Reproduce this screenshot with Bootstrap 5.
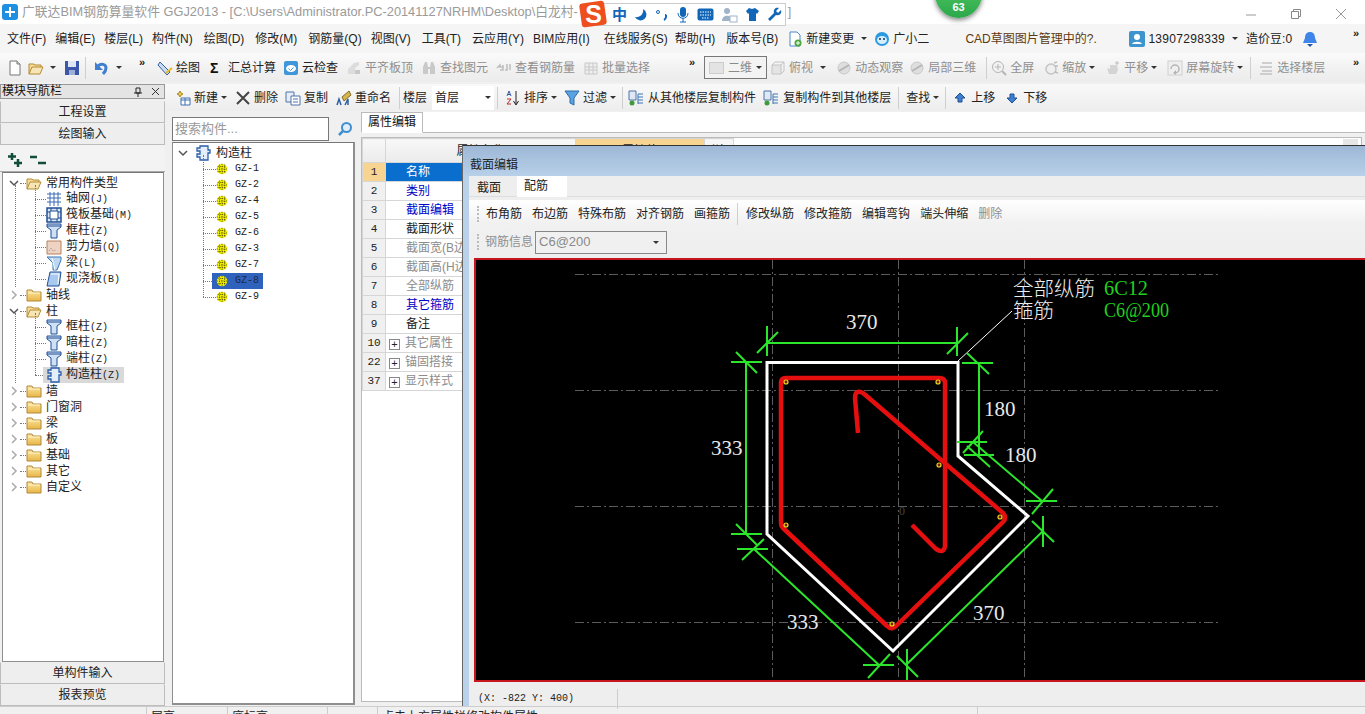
<!DOCTYPE html>
<html lang="zh-CN">
<head>
  <meta charset="UTF-8" />
  <meta name="viewport" content="width=device-width, initial-scale=1" />
  <title>广联达BIM钢筋算量软件 GGJ2013</title>
  <link href="https://cdn.jsdelivr.net/npm/bootstrap@5.3.3/dist/css/bootstrap.min.css" rel="stylesheet">
  <style>
    html, body { height: 100%; margin: 0; overflow: hidden; }
    body { width: 1365px; height: 714px; position: relative; background: #f0f0f0; color: #222;
      font-family: "Liberation Sans", "Noto Sans CJK SC", sans-serif; font-size: 12px; line-height: 16px; }
    svg.ic { width: 16px; height: 16px; flex: none; }
    .hw { font-family: "Liberation Mono", monospace; font-size: 10px; }
    .l3 { margin-left: 3px; } .l5 { margin-left: 5px; } .l6 { margin-left: 6px; } .l7 { margin-left: 7px; }
    .l8 { margin-left: 8px; } .l9 { margin-left: 9px; } .l10 { margin-left: 10px; }

    /* title, menu, toolbars */
    .title-bar { height: 24px; background: #fff; color: #9a9a9a; font-size: 12.8px; padding-left: 2px; white-space: nowrap; }
    .title-end { margin-left: 210px; }
    .win-btns { position: absolute; right: 18px; top: 4px; height: 20px; gap: 33px; }
    .menu-bar { height: 29px; background: #f5f5f5; white-space: nowrap; padding-left: 7px; }
    .menu-bar .mi { margin-right: 9px; }
    .menu-bar .mi-wide { margin-right: 11px; }
    .menu-bar .mi-bim { margin-right: 14px; }
    .menu-bar .mi-tight { margin-right: 7px; }
    .tool-bar { height: 29px; background: linear-gradient(#fbfbfb, #f1f1f1 55%, #ececec); white-space: nowrap; padding-left: 7px; }
    .tool-bar2 { height: 27px; margin-top: 2px; background: linear-gradient(#f9f9f9, #ededed); white-space: nowrap; padding-left: 10px; }
    .itm { display: flex; align-items: center; gap: 3px; flex: none; }
    .off { color: #8f8f8f; }
    .caret-dn { width: 0; height: 0; border: 3px solid transparent; border-top: 3px solid #333; border-bottom: 0; flex: none; }
    .vsep { width: 1px; height: 22px; background: #cfcfcf; flex: none; }
    .chev { width: 8px; font-size: 11px; line-height: 10px; font-weight: 700; align-self: flex-start; margin-top: 4px; flex: none; color: #222; }
    .tb-c1 { margin-left: 17px; }
    .tb-c2 { margin-left: 39px; }
    .sigma { width: 15px; font-size: 14px; line-height: 14px; text-align: left; color: #111; }
    .view-combo { width: 63px; height: 23px; border: 1px solid #777; background: #f3f3f3; color: #8a8a8a; padding: 0 4px; flex: none; }
    .view-swatch { width: 15px; height: 12px; background: #e3e3e3; border: 1px solid #ccc; margin-right: 4px; }
    .floor-box { width: 62px; height: 24px; background: #fff; flex: none; padding: 0 3px; }
    .news { color: #5c3a10; width: 164px; flex: none; margin-left: 36px; }
    .phone { letter-spacing: .3px; }

    /* body */
    .work { height: 624px; }
    .nav-pane { width: 165px; flex: none; }
    .nav-head { height: 15px; margin-top: 2px; background: #e4e4e4; border: 1px solid #999; line-height: 13px; color: #111; padding-left: 1px; }
    .side-btn { display: block; width: 100%; height: 22px; padding: 0; border-radius: 0; border: 1px solid #bdbdbd; border-top-color: #eee; background: #eee;
      font-size: 12px; line-height: 20px; color: #222; }
    .side-btn:hover { background: #eee; color: #222; }
    .btn-first { margin-top: 2px; }
    .xp-bar { height: 27px; background: #f3f3f3; padding: 7px 7px 0; border-bottom: 1px solid #aaa; gap: 7px; }
    .tree-box { background: #fff; border: 1px solid #8f8f8f; border-top-color: #777; }
    .tree-left { height: 490px; margin: 0 1px 0 2px; padding-top: 2px; }
    .comp-pane { width: 183px; flex: none; margin-left: 7px; }
    .search-wrap { height: 31px; padding-top: 6px; background: #f0f0f0; }
    .search-box { width: 157px; height: 24px; border: 1px solid #777; background: #fff; color: #999; font-size: 13px; line-height: 22px; padding-left: 2px; }
    .tree-mid { height: 563px; border-width: 1px 2px 2px 1px; padding-top: 2px; }

    .tree-row { height: 16px; display: flex; align-items: center; white-space: nowrap; position: relative; }
    .t-tw { width: 12px; flex: none; display: flex; justify-content: center; }
    .t-dash { border-bottom: 1px dotted #777; height: 1px; flex: none; }
    .nav-first { padding-left: 5px; }
    .fold-dash { width: 6px; }
    .kid { padding-left: 32px; }
    .kid-dash { width: 11px; }
    .kid-tx { margin-left: 4px; }
    .t-sel-grey { background: #d9d9d9; padding: 0 4px 0 3px; height: 16px; }
    .kid-dash-s { width: 8px; }
    .t-kids { position: relative; }
    .t-kids::before { content: ""; position: absolute; left: 32px; top: -6px; bottom: 8px; border-left: 1px dotted #777; }
    .t-kids::after { content: ""; position: absolute; left: 12px; top: -6px; bottom: 0; border-left: 1px dotted #777; }
    .mid-kids::before { left: 30px; top: -6px; }
    .mid-kids::after { display: none; }
    .mid-kid { padding-left: 30px; }
    .mid-dash { width: 13px; }
    .mid-dash-s { width: 9px; }
    svg.gi { width: 12px; height: 12px; flex: none; }
    .gz-tx { margin-left: 7px; color: #222; }
    .t-sel-blue { background: #2f62bd; padding: 0 4px; height: 16px; }
    .t-sel-blue .gz-tx { color: #1c2b45; }

    .prop-pane { width: 1005px; flex: none; margin-left: 6px; }
    .prop-tabs { height: 21px; border-bottom: 1px solid #bbb; background: #fff; margin-top: 1px; }
    .prop-tab { height: 21px; width: 62px; border: 1px solid #bbb; border-bottom-color: #fff; background: #fff; text-align: center; line-height: 19px; color: #111; }
    .prop-body { height: 565px; margin-top: 4px; background: #fff; border: 1px solid #bbb; width: 1001px; overflow: hidden; position: relative; }
    .scroll-up { position: absolute; right: 3px; top: 1px; width: 15px; height: 9px; background: #e6e6e6; }
    .prop-tbl { border-collapse: collapse; table-layout: fixed; width: 371px; }
    .prop-tbl .c-n { width: 23px; } .prop-tbl .c-nm { width: 190px; } .prop-tbl .c-val { width: 129px; } .prop-tbl .c-ex { width: 29px; }
    .prop-tbl td, .prop-tbl th { border: 1px solid #d6d6d6; height: 19px; padding: 0; font-weight: 400; overflow: hidden; white-space: nowrap; }
    .prop-tbl th { height: 24px; background: linear-gradient(#f8f8f8, #ebebeb); text-align: center; }
    .prop-tbl th.val-col { background: #f8d492; }
    .prop-tbl .n { background: #f0f0f0; text-align: center; font-family: "Liberation Mono", monospace; font-size: 11px; }
    .prop-tbl .n-on { background: #f8d492; }
    .prop-tbl .nm { padding-left: 20px; }
    .prop-tbl .nm-on { background: #0a6ecf; color: #fff; }
    .prop-tbl .lk { color: #0000c8; }
    .prop-tbl .gy { color: #8c8c8c; }
    .prop-tbl .gr { padding-left: 3px; color: #8c8c8c; }
    .plus-box { display: inline-block; width: 11px; height: 11px; border: 1px solid #888; line-height: 8px; text-align: center; color: #222; font-size: 11px; margin-right: 5px; vertical-align: -1px; }

    .status-line { height: 8px; overflow: hidden; background: #f0f0f0; border-top: 1px solid #ccc; line-height: 16px; }
    .status-line > div { border-right: 1px solid #ccc; padding: 2px 0 0 4px; height: 16px; flex: none; }
    .st-a { width: 147px; } .st-b { width: 81px; } .st-c { width: 100px; } .st-d { width: 50px; } .st-e { width: 600px; }

    /* floating: dialog, tray bar, badge */
    .sect-dlg { position: absolute; left: 462px; top: 145px; right: 0; height: 561px; border-top: 1px solid #333; border-left: 1px solid #666;
      background: linear-gradient(#9db7d6, #b9d1e9 31px); padding: 30px 0 0 6px; }
    .sect-title { position: absolute; left: 7px; top: 11px; color: #222; }
    .sect-inner { background: #eee; height: 530px; }
    .sect-tabs { height: 21px; border-bottom: 1px solid #ddd; background: #eee; }
    .sect-tab { width: 48px; height: 21px; padding-left: 8px; line-height: 24px; }
    .sect-tab-on { background: #fff; width: 50px; padding-left: 7px; line-height: 21px; }
    .sect-tools { height: 58px; margin-top: 3px; background: linear-gradient(#fff, #f1f1f1 40%, #eee); }
    .sect-row { height: 28px; padding-left: 8px; white-space: nowrap; }
    .row-gap { column-gap: 10px; }
    .row-gap .vsep { margin: 0 -2px 0 -3px; }
    .grip { width: 3px; height: 16px; border-left: 2px dotted #bbb; flex: none; }
    .row-gap .grip { margin-right: -4px; }
    .row2-grip { margin-right: 5px; }
    .rebar-combo { width: 132px; height: 23px; border: 1px solid #888; background: #f0f0f0; color: #8a8a8a; padding: 0 3px; margin-left: 2px; font-size: 13px; }
    .cad-view { display: block; height: 424px; margin-left: 5px; border: 2px solid #c4161c; border-right: 0; background: #000; }
    .cad-view svg { display: block; width: 890px; height: 420px; }
    .cad-status { height: 20px; margin-top: 7px; padding-left: 9px; font-family: "Liberation Mono", monospace; font-size: 10px; line-height: 20px; }
    .cad-status > div { border-right: 1px solid #ccc; width: 140px; }

    .ime-bar { position: absolute; left: 592px; top: 3px; width: 194px; height: 23px; background: #fff; border: 1px solid #ccc; padding-left: 19px; gap: 7px; }
    .ime-logo { position: absolute; left: 579px; top: 0; width: 29px; height: 28px; }
    .ime-zh { color: #1166b8; font-weight: 700; font-size: 15px; }
    .pts-badge { position: absolute; left: 935px; top: -30px; width: 47px; height: 48px; border-radius: 50%; background: linear-gradient(#5fcf6b, #2aa84a); color: #fff;
      font-size: 11px; font-weight: 700; text-align: center; padding-top: 29px; box-shadow: 0 2px 5px rgba(0,0,0,.5); }
  </style>
</head>
<body>

  <svg width="0" height="0" class="position-absolute">
    <defs>
      <linearGradient id="gFold" x1="0" y1="0" x2="0" y2="1"><stop offset="0" stop-color="#fbe7a1"/><stop offset="1" stop-color="#e7b544"/></linearGradient>
      <symbol id="i-doc" viewBox="0 0 16 16"><path d="M3 1h7l3 3v11H3z" fill="#fff" stroke="#777"/><path d="M10 1v3h3" fill="#ddd" stroke="#777"/></symbol>
      <symbol id="i-open" viewBox="0 0 16 16"><path d="M1 14V4h5l1 1h6v2" fill="#f5dc9a" stroke="#b58b35"/><path d="M1 14l3-7h11l-3 7z" fill="#f7e6b5" stroke="#b58b35"/></symbol>
      <symbol id="i-fold" viewBox="0 0 16 16"><path d="M1 3h5l1 2h8v9H1z" fill="url(#gFold)" stroke="#b08a3a"/><path d="M2 6h12" stroke="#fff3c4"/></symbol>
      <symbol id="i-save" viewBox="0 0 16 16"><path d="M1 1h14v14H1z" fill="#3c57a8"/><path d="M4 1h8v6H4z" fill="#dfe6f5"/><path d="M5 10h6v5H5z" fill="#9fb0d8"/></symbol>
      <symbol id="i-undo" viewBox="0 0 16 16"><path d="M5 6c3-3 8-2 8 2 0 3-1 4-3 6" fill="none" stroke="#3f7ed0" stroke-width="3"/><path d="M2 2v8h8z" fill="#3f7ed0"/></symbol>
      <symbol id="i-draw" viewBox="0 0 16 16"><path d="M3 2l10 10-3 3L1 5z" fill="#cbdcf2" stroke="#33609f"/><path d="M9 13l6-5" stroke="#e8b62c" stroke-width="2"/></symbol>
      <symbol id="i-cloud" viewBox="0 0 16 16"><rect x="1" y="1" width="14" height="14" rx="2" fill="#3f97d8"/><ellipse cx="8" cy="8.500" rx="5" ry="3.500" fill="#fff"/><path d="M5.500 8.500l2 2 3-3" stroke="#3f97d8" fill="none"/></symbol>
      <symbol id="i-gbox" viewBox="0 0 16 16"><path d="M2 5h9v9H2z" fill="#e4e4e4" stroke="#c4c4c4"/><path d="M2 5l3-3h9v9l-3 3M11 5l3-3" fill="none" stroke="#c4c4c4"/></symbol>
      <symbol id="i-gplate" viewBox="0 0 16 16"><path d="M2 14V9l6-6 5-1v3l-4 3v6z" fill="#dcdcdc"/><path d="M9 10h5v4H9z" fill="#c8c8c8"/></symbol>
      <symbol id="i-gbino" viewBox="0 0 16 16"><path d="M2 14V7l2-5h2l1 5v7zM9 14V7l1-5h2l2 5v7z" fill="#c9c9c9"/><path d="M7 8h2" stroke="#999"/></symbol>
      <symbol id="i-grebar" viewBox="0 0 16 16"><path d="M1 8l3-3v2h3M7 5v5H4" fill="none" stroke="#bdbdbd" stroke-width="1.500"/><path d="M11 4v6h-2M14 4v6" fill="none" stroke="#bdbdbd" stroke-width="1.500"/></symbol>
      <symbol id="i-gball" viewBox="0 0 16 16"><circle cx="8" cy="8" r="6" fill="#dedede" stroke="#c8c8c8"/><path d="M3 11L13 5" stroke="#b5b5b5" stroke-width="2"/></symbol>
      <symbol id="i-gzoom" viewBox="0 0 16 16"><circle cx="7" cy="7" r="5.500" fill="#f2f2f2" stroke="#b5b5b5"/><path d="M11 11l4 4" stroke="#b5b5b5" stroke-width="2"/><path d="M4 7h6M7 4v6" stroke="#b5b5b5"/></symbol>
      <symbol id="i-gshrink" viewBox="0 0 16 16"><circle cx="8" cy="9" r="5" fill="#efefef" stroke="#c4c4c4" stroke-width="1.500"/><path d="M11 3l3-1M12 6h3M12 12l3 1" stroke="#bdbdbd" stroke-width="1.500"/></symbol>
      <symbol id="i-ghand" viewBox="0 0 16 16"><path d="M4 14L2 8l3 1V5h7l1 5-2 4z" fill="#d4d4d4"/><path d="M12 1v4M10 3h4" stroke="#bdbdbd"/></symbol>
      <symbol id="i-grot" viewBox="0 0 16 16"><rect x="1" y="1" width="14" height="14" fill="#efefef" stroke="#d0d0d0"/><path d="M4 9a4 4 0 1 1 4 4" fill="none" stroke="#b5b5b5" stroke-width="1.500"/><path d="M9 10l-3 3 3 2z" fill="#b5b5b5"/></symbol>
      <symbol id="i-ggrid" viewBox="0 0 16 16"><path d="M2 3h12v11H2z" fill="#efefef" stroke="#c8c8c8"/><path d="M2 7h12M2 10h12M6 3v11M10 3v11" stroke="#c8c8c8"/></symbol>
      <symbol id="i-gfloor" viewBox="0 0 16 16"><path d="M4 3h10M2 7h12M4 11h10M2 14h12" stroke="#c2c2c2" stroke-width="1.500"/></symbol>
      <symbol id="i-change" viewBox="0 0 16 16"><path d="M3 1h7l3 3v11H3z" fill="#fff" stroke="#4a87c7"/><circle cx="11" cy="12" r="3.500" fill="#4aa93a"/><path d="M9 12h4M11 10v4" stroke="#fff"/></symbol>
      <symbol id="i-bot" viewBox="0 0 16 16"><circle cx="8" cy="8" r="7" fill="#2c9ae0"/><ellipse cx="8" cy="9" rx="5" ry="4" fill="#d6efff"/><circle cx="6" cy="8" r="1" fill="#135"/><circle cx="10" cy="8" r="1" fill="#135"/></symbol>
      <symbol id="i-user" viewBox="0 0 16 16"><rect width="16" height="16" rx="2" fill="#3d94cf"/><circle cx="8" cy="6" r="3" fill="#fff"/><path d="M3 13c1-3 9-3 10 0z" fill="#fff"/></symbol>
      <symbol id="i-bell" viewBox="0 0 16 16"><path d="M8 1c3 0 5 2 5 6l2 5H1l2-5c0-4 2-6 5-6z" fill="#3f84e8"/><path d="M5 13h6l-3 3z" fill="#24579f"/></symbol>
      <symbol id="i-new" viewBox="0 0 16 16"><path d="M5 1l1 2 2 1-2 1-1 2-1-2-2-1 2-1z" fill="#f4cf47" stroke="#a8862a"/><path d="M6 8h9v7H6z" fill="#fff" stroke="#3c6fb0"/><path d="M6 10h9M10 8v7" stroke="#3c6fb0"/></symbol>
      <symbol id="i-del" viewBox="0 0 16 16"><path d="M2 2l12 12M14 2L2 14" stroke="#444" stroke-width="2"/></symbol>
      <symbol id="i-copy" viewBox="0 0 16 16"><path d="M1 2h8v10H1z" fill="#e6edf7" stroke="#4e74a6"/><path d="M6 6h9v9H6z" fill="#fff" stroke="#4e74a6"/><path d="M8 9h5M8 12h5" stroke="#4e74a6"/></symbol>
      <symbol id="i-ren" viewBox="0 0 16 16"><path d="M6 7l7-6 2 4-7 6z" fill="#d9b64a" stroke="#7e6a2a"/><path d="M1 15l2-6 2 6M9 15l3-6v6" stroke="#2c5fa6" stroke-width="1.500" fill="none"/></symbol>
      <symbol id="i-sort" viewBox="0 0 16 16"><path d="M2 6l2-5 2 5M3 4.500h2" stroke="#3458a6" fill="none"/><path d="M2 9h4l-4 5h4" stroke="#b62a2a" fill="none"/><path d="M11 1v13M8.500 11l2.500 4 2.500-4" stroke="#222" fill="none"/></symbol>
      <symbol id="i-filter" viewBox="0 0 16 16"><path d="M1 1h14L10 8v7l-4-2V8z" fill="#5aa3e0" stroke="#2c6cab"/></symbol>
      <symbol id="i-cp1" viewBox="0 0 16 16"><path d="M1 1h7v9H1z" fill="#dfe8f4" stroke="#4e74a6"/><circle cx="4" cy="13" r="2.500" fill="#3f9a3a"/><path d="M10 4h5M10 7h5M10 10h5M10 13h5M10 4v10" stroke="#3c76b5"/></symbol>
      <symbol id="i-up" viewBox="0 0 16 16"><path d="M8 3l5 5h-3v4H6V8H3z" fill="#3f7fd0" stroke="#1f4f96"/></symbol>
      <symbol id="i-dn" viewBox="0 0 16 16"><path d="M8 13L3 8h3V4h4v4h3z" fill="#3f7fd0" stroke="#1f4f96"/></symbol>
      <symbol id="i-search" viewBox="0 0 16 16"><circle cx="9.500" cy="6.500" r="4.500" fill="#e2effa" stroke="#3f8fcf" stroke-width="2"/><path d="M6 10l-4 4" stroke="#3f8fcf" stroke-width="2.500"/></symbol>
      <symbol id="i-col" viewBox="0 0 16 16"><path d="M1 1h14v3l-4 3v8H5V7L1 4z" fill="#cfe0f5" stroke="#1e4f98"/><path d="M1 3h14" stroke="#1e4f98"/></symbol>
      <symbol id="i-grid" viewBox="0 0 16 16"><path d="M1 3h14M1 7h14M1 11h14M4 1v14M8 1v14M12 1v14" stroke="#3b6bb5"/></symbol>
      <symbol id="i-raft" viewBox="0 0 16 16"><path d="M1 1h14v14H1z" fill="#dbe7f6" stroke="#204f95" stroke-width="1.500"/><path d="M4 4h8v8H4z" fill="#fff" stroke="#204f95"/><path d="M1 5h3M1 11h3M12 5h3M12 11h3M5 1v3M11 1v3M5 12v3M11 12v3" stroke="#204f95"/></symbol>
      <symbol id="i-wall" viewBox="0 0 16 16"><path d="M1 2h14v13H1z" fill="#efd3c2" stroke="#b5805f"/><path d="M3 12l2-3 2 3 3-1" stroke="#999" stroke-dasharray="1 1" fill="none"/></symbol>
      <symbol id="i-beam" viewBox="0 0 16 16"><path d="M1 2h14v3L11 15H7V8z" fill="#bcd7f2" stroke="#3c76b5"/><path d="M6 3l3 12" stroke="#fff"/></symbol>
      <symbol id="i-slab" viewBox="0 0 16 16"><path d="M4 1h11l-2 14H1z" fill="#a9c9ee" stroke="#1e4f98"/><path d="M5 3h8l-1 10" stroke="#fff" fill="none"/></symbol>
      <symbol id="i-gzc" viewBox="0 0 16 16"><path d="M5 1h8v4h2v3h-2v7H5v-3H2V9h3V6H2V3h3z" fill="#e4eefb" stroke="#2a5ea8" stroke-width="1.300"/></symbol>
      <symbol id="i-gear" viewBox="0 0 16 16"><circle cx="8" cy="8" r="7" fill="#f4f000"/><path d="M2 4.500h12M1 8h14M2 11.500h12M4.500 2v12M8 1v14M11.500 2v12" stroke="#3a3a00" stroke-dasharray="1.500 1.500"/></symbol>
      <symbol id="i-plus" viewBox="0 0 16 16"><path d="M5 1v7M1 4.500h8M11 7v8M7 11h8" stroke="#114d3a" stroke-width="2.500"/></symbol>
      <symbol id="i-minus" viewBox="0 0 16 16"><path d="M0 5h7M8 11h8" stroke="#114d3a" stroke-width="2.500"/></symbol>
      <symbol id="i-arrow-d" viewBox="0 0 12 12"><path d="M2 4l4 4 4-4" stroke="#555" stroke-width="1.500" fill="none"/></symbol>
      <symbol id="i-arrow-r" viewBox="0 0 12 12"><path d="M4 2l4 4-4 4" stroke="#aaa" stroke-width="1.500" fill="none"/></symbol>
    </defs>
  </svg>

  <!-- title -->
  <div class="title-bar d-flex align-items-center">
    <svg class="ic me-1" viewBox="0 0 16 16"><rect width="16" height="16" rx="3" fill="#1f8fe0"/><path d="M8 3v10M3 8h10" stroke="#fff" stroke-width="2"/></svg>
    <span>广联达BIM钢筋算量软件 GGJ2013 - [C:\Users\Administrator.PC-20141127NRHM\Desktop\白龙村-</span>
    <span class="title-end">]</span>
  </div>
  <div class="win-btns d-flex align-items-center">
    <svg width="12" height="12"><path d="M1 7h10" stroke="#999"/></svg>
    <svg width="12" height="12"><path d="M1.500 3.500h7v7h-7zM3.500 3.500v-2h7v7h-2" stroke="#888" fill="none"/></svg>
    <svg width="12" height="12"><path d="M1 1l10 10M11 1L1 11" stroke="#999"/></svg>
  </div>

  <!-- menu -->
  <div class="menu-bar d-flex align-items-center">
    <span class="itm mi">文件(F)</span>
    <span class="itm mi">编辑(E)</span>
    <span class="itm mi">楼层(L)</span>
    <span class="itm mi-wide">构件(N)</span>
    <span class="itm mi-wide">绘图(D)</span>
    <span class="itm mi-wide">修改(M)</span>
    <span class="itm mi">钢筋量(Q)</span>
    <span class="itm mi-wide">视图(V)</span>
    <span class="itm mi-wide">工具(T)</span>
    <span class="itm mi">云应用(Y)</span>
    <span class="itm mi-bim">BIM应用(I)</span>
    <span class="itm mi-tight">在线服务(S)</span>
    <span class="itm mi-wide">帮助(H)</span>
    <span class="itm mi">版本号(B)</span>
    <span class="itm mi-tight"><svg class="ic"><use href="#i-change"/></svg>新建变更<i class="caret-dn ms-1"></i></span>
    <span class="itm"><svg class="ic"><use href="#i-bot"/></svg>广小二</span>
    <span class="news">CAD草图图片管理中的?.</span>
    <span class="itm"><svg class="ic"><use href="#i-user"/></svg><span class="phone">13907298339</span><i class="caret-dn ms-1"></i></span>
    <span class="itm l8">造价豆:0</span>
    <svg class="ic l10"><use href="#i-bell"/></svg>
    <span class="chev ms-auto me-1">»</span>
  </div>

  <!-- toolbar -->
  <div class="tool-bar d-flex align-items-center">
    <svg class="ic"><use href="#i-doc"/></svg>
    <span class="itm l5"><svg class="ic"><use href="#i-open"/></svg><i class="caret-dn l3"></i></span>
    <svg class="ic l8"><use href="#i-save"/></svg>
    <span class="vsep l5"></span>
    <span class="itm l7"><svg class="ic"><use href="#i-undo"/></svg><i class="caret-dn ms-1"></i></span>
    <span class="chev tb-c1">»</span>
    <span class="itm l10"><svg class="ic"><use href="#i-draw"/></svg>绘图</span>
    <span class="itm l10"><b class="sigma">Σ</b>汇总计算</span>
    <span class="itm l7"><svg class="ic"><use href="#i-cloud"/></svg>云检查</span>
    <span class="itm l8 off"><svg class="ic"><use href="#i-gplate"/></svg>平齐板顶</span>
    <span class="itm l8 off"><svg class="ic"><use href="#i-gbino"/></svg>查找图元</span>
    <span class="itm l8 off"><svg class="ic"><use href="#i-grebar"/></svg>查看钢筋量</span>
    <span class="itm l8 off"><svg class="ic"><use href="#i-ggrid"/></svg>批量选择</span>
    <span class="chev tb-c2">»</span>
    <span class="view-combo d-flex align-items-center l7"><i class="view-swatch"></i>二维<i class="caret-dn ms-auto"></i></span>
    <span class="itm off l3"><svg class="ic"><use href="#i-gbox"/></svg>俯视<i class="caret-dn ms-1"></i></span>
    <span class="itm off l10"><svg class="ic"><use href="#i-gball"/></svg>动态观察</span>
    <span class="itm off l6"><svg class="ic"><use href="#i-gball"/></svg>局部三维</span>
    <span class="vsep l10"></span>
    <span class="itm off ms-1"><svg class="ic"><use href="#i-gzoom"/></svg>全屏</span>
    <span class="itm off l9"><svg class="ic"><use href="#i-gshrink"/></svg>缩放<i class="caret-dn"></i></span>
    <span class="itm off l10"><svg class="ic"><use href="#i-ghand"/></svg>平移<i class="caret-dn"></i></span>
    <span class="itm off l10"><svg class="ic"><use href="#i-grot"/></svg>屏幕旋转<i class="caret-dn"></i></span>
    <span class="vsep l7"></span>
    <span class="itm off l7"><svg class="ic"><use href="#i-gfloor"/></svg>选择楼层</span>
    <span class="chev ms-auto me-1">»</span>
  </div>

  <div class="work d-flex">
    <!-- left navigator -->
    <div class="nav-pane">
      <div class="nav-head d-flex align-items-center">模块导航栏
        <svg class="ms-auto" width="10" height="10"><path d="M3 1h4v5H3zM1 6h8M5 6v4" stroke="#222" fill="none"/></svg>
        <svg class="ms-2 me-1" width="9" height="9"><path d="M1 1l7 7M8 1L1 8" stroke="#333"/></svg>
      </div>
      <button type="button" class="btn side-btn btn-first">工程设置</button>
      <button type="button" class="btn side-btn">绘图输入</button>
      <div class="xp-bar d-flex"><svg class="ic"><use href="#i-plus"/></svg><svg class="ic"><use href="#i-minus"/></svg></div>
      <div class="tree-box tree-left">
        <div class="tree-row nav-first"><span class="t-tw"><svg width="12" height="12"><use href="#i-arrow-d"/></svg></span><span class="t-dash fold-dash"></span><svg class="ic"><use href="#i-open"/></svg><span class="ms-1">常用构件类型</span></div>
        <div class="t-kids">
          <div class="tree-row kid"><span class="t-dash kid-dash"></span><svg class="ic"><use href="#i-grid"/></svg><span class="kid-tx">轴网<span class="hw">(J)</span></span></div>
          <div class="tree-row kid"><span class="t-dash kid-dash"></span><svg class="ic"><use href="#i-raft"/></svg><span class="kid-tx">筏板基础<span class="hw">(M)</span></span></div>
          <div class="tree-row kid"><span class="t-dash kid-dash"></span><svg class="ic"><use href="#i-col"/></svg><span class="kid-tx">框柱<span class="hw">(Z)</span></span></div>
          <div class="tree-row kid"><span class="t-dash kid-dash"></span><svg class="ic"><use href="#i-wall"/></svg><span class="kid-tx">剪力墙<span class="hw">(Q)</span></span></div>
          <div class="tree-row kid"><span class="t-dash kid-dash"></span><svg class="ic"><use href="#i-beam"/></svg><span class="kid-tx">梁<span class="hw">(L)</span></span></div>
          <div class="tree-row kid"><span class="t-dash kid-dash"></span><svg class="ic"><use href="#i-slab"/></svg><span class="kid-tx">现浇板<span class="hw">(B)</span></span></div>
        </div>
        <div class="tree-row nav-first"><span class="t-tw"><svg width="12" height="12"><use href="#i-arrow-r"/></svg></span><span class="t-dash fold-dash"></span><svg class="ic"><use href="#i-fold"/></svg><span class="ms-1">轴线</span></div>
        <div class="tree-row nav-first"><span class="t-tw"><svg width="12" height="12"><use href="#i-arrow-d"/></svg></span><span class="t-dash fold-dash"></span><svg class="ic"><use href="#i-open"/></svg><span class="ms-1">柱</span></div>
        <div class="t-kids">
          <div class="tree-row kid"><span class="t-dash kid-dash"></span><svg class="ic"><use href="#i-col"/></svg><span class="kid-tx">框柱<span class="hw">(Z)</span></span></div>
          <div class="tree-row kid"><span class="t-dash kid-dash"></span><svg class="ic"><use href="#i-col"/></svg><span class="kid-tx">暗柱<span class="hw">(Z)</span></span></div>
          <div class="tree-row kid"><span class="t-dash kid-dash"></span><svg class="ic"><use href="#i-col"/></svg><span class="kid-tx">端柱<span class="hw">(Z)</span></span></div>
          <div class="tree-row kid"><span class="t-dash kid-dash-s"></span><span class="t-sel-grey d-flex align-items-center"><svg class="ic"><use href="#i-gzc"/></svg><span class="kid-tx">构造柱<span class="hw">(Z)</span></span></span></div>
        </div>
        <div class="tree-row nav-first"><span class="t-tw"><svg width="12" height="12"><use href="#i-arrow-r"/></svg></span><span class="t-dash fold-dash"></span><svg class="ic"><use href="#i-fold"/></svg><span class="ms-1">墙</span></div>
        <div class="tree-row nav-first"><span class="t-tw"><svg width="12" height="12"><use href="#i-arrow-r"/></svg></span><span class="t-dash fold-dash"></span><svg class="ic"><use href="#i-fold"/></svg><span class="ms-1">门窗洞</span></div>
        <div class="tree-row nav-first"><span class="t-tw"><svg width="12" height="12"><use href="#i-arrow-r"/></svg></span><span class="t-dash fold-dash"></span><svg class="ic"><use href="#i-fold"/></svg><span class="ms-1">梁</span></div>
        <div class="tree-row nav-first"><span class="t-tw"><svg width="12" height="12"><use href="#i-arrow-r"/></svg></span><span class="t-dash fold-dash"></span><svg class="ic"><use href="#i-fold"/></svg><span class="ms-1">板</span></div>
        <div class="tree-row nav-first"><span class="t-tw"><svg width="12" height="12"><use href="#i-arrow-r"/></svg></span><span class="t-dash fold-dash"></span><svg class="ic"><use href="#i-fold"/></svg><span class="ms-1">基础</span></div>
        <div class="tree-row nav-first"><span class="t-tw"><svg width="12" height="12"><use href="#i-arrow-r"/></svg></span><span class="t-dash fold-dash"></span><svg class="ic"><use href="#i-fold"/></svg><span class="ms-1">其它</span></div>
        <div class="tree-row nav-first"><span class="t-tw"><svg width="12" height="12"><use href="#i-arrow-r"/></svg></span><span class="t-dash fold-dash"></span><svg class="ic"><use href="#i-fold"/></svg><span class="ms-1">自定义</span></div>
      </div>
      <button type="button" class="btn side-btn">单构件输入</button>
      <button type="button" class="btn side-btn">报表预览</button>
    </div>

    <div class="flex-grow-1">
      <!-- second toolbar -->
      <div class="tool-bar2 d-flex align-items-center">
        <span class="itm"><svg class="ic"><use href="#i-new"/></svg>新建<i class="caret-dn"></i></span>
        <span class="itm l8"><svg class="ic"><use href="#i-del"/></svg>删除</span>
        <span class="itm l7"><svg class="ic"><use href="#i-copy"/></svg>复制</span>
        <span class="itm l8"><svg class="ic"><use href="#i-ren"/></svg>重命名</span>
        <span class="vsep l8"></span>
        <span class="l3">楼层</span>
        <span class="floor-box d-flex align-items-center l5">首层<i class="caret-dn ms-auto"></i></span>
        <span class="vsep l3"></span>
        <span class="itm l7"><svg class="ic"><use href="#i-sort"/></svg>排序<i class="caret-dn"></i></span>
        <span class="itm l7"><svg class="ic"><use href="#i-filter"/></svg>过滤<i class="caret-dn"></i></span>
        <span class="vsep l6"></span>
        <span class="itm l5 gap-1"><svg class="ic"><use href="#i-cp1"/></svg>从其他楼层复制构件</span>
        <span class="itm l7 gap-1"><svg class="ic"><use href="#i-cp1"/></svg>复制构件到其他楼层</span>
        <span class="vsep l7"></span>
        <span class="itm l7">查找<i class="caret-dn"></i></span>
        <span class="vsep l6"></span>
        <span class="itm l6"><svg class="ic"><use href="#i-up"/></svg>上移</span>
        <span class="itm l9"><svg class="ic"><use href="#i-dn"/></svg>下移</span>
      </div>

      <div class="d-flex">
        <!-- component list -->
        <div class="comp-pane">
          <div class="search-wrap d-flex align-items-start">
            <div class="search-box">搜索构件...</div>
            <svg class="ic ms-2 mt-1"><use href="#i-search"/></svg>
          </div>
          <div class="tree-box tree-mid">
            <div class="tree-row"><span class="t-tw ms-1"><svg width="12" height="12"><use href="#i-arrow-d"/></svg></span><svg class="ic l6"><use href="#i-gzc"/></svg><span class="l5">构造柱</span></div>
            <div class="t-kids mid-kids">
              <div class="tree-row mid-kid"><span class="t-dash mid-dash"></span><svg class="gi"><use href="#i-gear"/></svg><span class="hw gz-tx">GZ-1</span></div>
              <div class="tree-row mid-kid"><span class="t-dash mid-dash"></span><svg class="gi"><use href="#i-gear"/></svg><span class="hw gz-tx">GZ-2</span></div>
              <div class="tree-row mid-kid"><span class="t-dash mid-dash"></span><svg class="gi"><use href="#i-gear"/></svg><span class="hw gz-tx">GZ-4</span></div>
              <div class="tree-row mid-kid"><span class="t-dash mid-dash"></span><svg class="gi"><use href="#i-gear"/></svg><span class="hw gz-tx">GZ-5</span></div>
              <div class="tree-row mid-kid"><span class="t-dash mid-dash"></span><svg class="gi"><use href="#i-gear"/></svg><span class="hw gz-tx">GZ-6</span></div>
              <div class="tree-row mid-kid"><span class="t-dash mid-dash"></span><svg class="gi"><use href="#i-gear"/></svg><span class="hw gz-tx">GZ-3</span></div>
              <div class="tree-row mid-kid"><span class="t-dash mid-dash"></span><svg class="gi"><use href="#i-gear"/></svg><span class="hw gz-tx">GZ-7</span></div>
              <div class="tree-row mid-kid"><span class="t-dash mid-dash-s"></span><span class="t-sel-blue d-flex align-items-center"><svg class="gi"><use href="#i-gear"/></svg><span class="hw gz-tx">GZ-8</span></span></div>
              <div class="tree-row mid-kid"><span class="t-dash mid-dash"></span><svg class="gi"><use href="#i-gear"/></svg><span class="hw gz-tx">GZ-9</span></div>
            </div>
          </div>
        </div>

        <!-- properties -->
        <div class="prop-pane">
          <div class="prop-tabs"><div class="prop-tab">属性编辑</div></div>
          <div class="prop-body">
            <span class="scroll-up"></span>
            <table class="prop-tbl">
              <colgroup><col class="c-n"><col class="c-nm"><col class="c-val"><col class="c-ex"></colgroup>
              <tr><th></th><th>属性名称</th><th class="val-col">属性值</th><th>附加</th></tr>
              <tr><td class="n n-on">1</td><td class="nm nm-on">名称</td><td></td><td></td></tr>
              <tr><td class="n">2</td><td class="nm lk">类别</td><td></td><td></td></tr>
              <tr><td class="n">3</td><td class="nm lk">截面编辑</td><td></td><td></td></tr>
              <tr><td class="n">4</td><td class="nm">截面形状</td><td></td><td></td></tr>
              <tr><td class="n">5</td><td class="nm gy">截面宽(B边)</td><td></td><td></td></tr>
              <tr><td class="n">6</td><td class="nm gy">截面高(H边)</td><td></td><td></td></tr>
              <tr><td class="n">7</td><td class="nm gy">全部纵筋</td><td></td><td></td></tr>
              <tr><td class="n">8</td><td class="nm lk">其它箍筋</td><td></td><td></td></tr>
              <tr><td class="n">9</td><td class="nm">备注</td><td></td><td></td></tr>
              <tr><td class="n">10</td><td class="gr"><span class="plus-box">+</span>其它属性</td><td></td><td></td></tr>
              <tr><td class="n">22</td><td class="gr"><span class="plus-box">+</span>锚固搭接</td><td></td><td></td></tr>
              <tr><td class="n">37</td><td class="gr"><span class="plus-box">+</span>显示样式</td><td></td><td></td></tr>
            </table>
          </div>
        </div>
      </div>
    </div>
  </div>

  <!-- status bar -->
  <div class="status-line d-flex">
    <div class="st-a"></div><div class="st-b">层高</div><div class="st-c">底标高</div><div class="st-d"></div><div class="st-e">点击上方属性栏修改构件属性</div>
  </div>

  <!-- floating dialog -->
  <div class="sect-dlg">
    <div class="sect-title">截面编辑</div>
    <div class="sect-inner">
      <div class="sect-tabs d-flex">
        <div class="sect-tab">截面</div>
        <div class="sect-tab sect-tab-on">配筋</div>
      </div>
      <div class="sect-tools">
        <div class="sect-row d-flex align-items-center row-gap">
          <i class="grip"></i>
          <span>布角筋</span><span>布边筋</span><span>特殊布筋</span><span>对齐钢筋</span><span>画箍筋</span>
          <span class="vsep"></span>
          <span>修改纵筋</span><span>修改箍筋</span><span>编辑弯钩</span><span>端头伸缩</span><span class="off">删除</span>
        </div>
        <div class="sect-row d-flex align-items-center">
          <i class="grip row2-grip"></i>
          <span class="off">钢筋信息</span>
          <div class="rebar-combo d-flex align-items-center">C6@200<i class="caret-dn ms-auto me-1"></i></div>
        </div>
      </div>
      <div class="cad-view">
        <svg viewBox="476 259 890 420" xmlns="http://www.w3.org/2000/svg">
          <!-- axis grid -->
          <g stroke="#5c5c5c" stroke-width="1" stroke-dasharray="9 3 2 3" fill="none" shape-rendering="crispEdges">
            <path d="M575 273H1221M575 389H1221M575 505H1221M575 621H1221"/>
            <path d="M772 259V679M898 259V679M1024 259V679"/>
          </g>
          <text x="899" y="514" fill="#444" font-family="Liberation Serif" font-size="12">0</text>
          <!-- outline -->
          <path d="M767 361.500H958V455L1028 515L893 650L767 533Z" fill="none" stroke="#fff" stroke-width="3"/>
          <path d="M958 360L1012 310" stroke="#fff" stroke-width="1"/>
          <!-- stirrup -->
          <path d="M858 432L855 397Q855 388 863 392L1003 512Q1007 517 1003 521L897 624Q892 630 887 625L783 527Q781 525 781 522V382Q781 377 786 377H939Q945 377 945 382V545Q944 553 936 548L912 524" fill="none" stroke="#e60f0f" stroke-width="4.500" stroke-linejoin="round"/>
          <g fill="#7a1a00" stroke="#e8d820" stroke-width="1.200">
            <circle cx="786" cy="381" r="2"/><circle cx="938" cy="381" r="2"/><circle cx="939" cy="464" r="2"/>
            <circle cx="786" cy="524" r="2"/><circle cx="1000" cy="516" r="2"/><circle cx="892" cy="623" r="2"/>
          </g>
          <!-- dimensions -->
          <g stroke="#2be62b" stroke-width="2" fill="none">
            <path d="M767 342H957M767 325V355M757 352L778 331M957 326V355M947 353L968 332"/>
            <path d="M746 361V533M731 361H762M736 351L757 372M731 533H762M736 523L757 544"/>
            <path d="M979 362V453M962 362H993M967 352L989 373M957 441H987M963 452L983 430"/>
            <path d="M973 441L1042 500M964 454H994M967 445L990 466M1026 500H1057M1032 513L1053 488"/>
            <path d="M907 663L1043 530M1043 515V546M1032 520L1054 541M907 648V679M897 655L918 676"/>
            <path d="M754 548L879 664M737 548H768M742 559L764 538M863 664H894M868 677L890 653"/>
          </g>
          <g fill="#e8e8e8" font-family="Liberation Serif" font-size="21">
            <text x="846" y="328">370</text><text x="711" y="454">333</text>
            <text x="984" y="415">180</text><text x="1005" y="461">180</text>
            <text x="787" y="628">333</text><text x="973" y="619">370</text>
          </g>
          <g font-family="Noto Sans CJK SC" font-size="20.500" fill="#eee" font-weight="300">
            <text x="1013" y="295">全部纵筋</text><text x="1013" y="317">箍筋</text>
          </g>
          <g font-family="Liberation Serif" font-size="20" fill="#1fd01f">
            <text x="1104" y="294" textLength="44" lengthAdjust="spacingAndGlyphs">6C12</text><text x="1104" y="316" textLength="65" lengthAdjust="spacingAndGlyphs">C6@200</text>
          </g>
        </svg>
      </div>
      <div class="cad-status d-flex"><div>(X: -822 Y: 400)</div></div>
    </div>
  </div>

  <!-- tray floaters -->
  <div class="ime-bar d-flex align-items-center">
    <span class="ime-zh">中</span>
    <svg width="14" height="14" viewBox="0 0 14 14"><path d="M9 1a6 6 0 1 1-8 8c5 1 9-3 8-8z" fill="#1166b8"/></svg>
    <svg width="14" height="14" viewBox="0 0 14 14"><circle cx="3" cy="4" r="1.500" fill="none" stroke="#1166b8"/><path d="M10 7c2 0 1 4-1 5" stroke="#1166b8" stroke-width="2" fill="none"/></svg>
    <svg width="14" height="17" viewBox="0 0 14 17"><rect x="4" y="1" width="6" height="10" rx="3" fill="#1166b8"/><path d="M2 7c0 7 10 7 10 0M7 12v4M4 16h6" stroke="#1166b8" fill="none"/></svg>
    <svg width="17" height="13" viewBox="0 0 17 13"><rect x="0.500" y="0.500" width="16" height="12" rx="2" fill="#1166b8"/><path d="M3 4h11M3 7h11M5 10h7" stroke="#fff" stroke-dasharray="1.500 1"/></svg>
    <svg width="17" height="16" viewBox="0 0 17 16"><circle cx="6" cy="4" r="3" fill="#9fb4c8"/><path d="M1 14c0-7 10-7 10 0z" fill="#9fb4c8"/><rect x="9" y="9" width="7" height="6" fill="#fff" stroke="#9fb4c8"/></svg>
    <svg width="15" height="15" viewBox="0 0 15 15"><path d="M4 1l3 1 3-1 4 3-2 3-1-1v8H4V6L3 7 1 4z" fill="#1166b8"/></svg>
    <svg width="15" height="15" viewBox="0 0 15 15"><path d="M14 3l-3 3-2-2 3-3c-3-1-6 1-5 5L1 12l2 2 6-6c4 1 6-2 5-5z" fill="#1166b8"/></svg>
  </div>
  <svg class="ime-logo" viewBox="0 0 28 28"><rect x="1" y="2" width="25" height="24" rx="3" transform="rotate(-8 14 14)" fill="#ee4f1f"/><text x="14" y="23" text-anchor="middle" font-family="Liberation Sans" font-weight="700" font-size="25" fill="#fff">S</text></svg>
  <div class="pts-badge">63</div>

</body>
</html>
